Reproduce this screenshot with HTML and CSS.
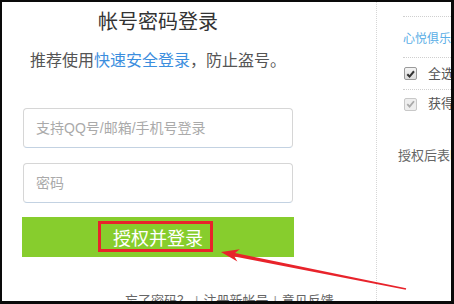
FILE: index.html
```html
<!DOCTYPE html>
<html lang="zh-CN">
<head>
<meta charset="utf-8">
<title>帐号密码登录</title>
<link rel="stylesheet" href="styles.css">
</head>
<body>
<div class="frame">
  <div class="left">
    <h1 class="title">帐号密码登录</h1>
    <p class="subtitle">推荐使用<a class="blue" href="#">快速安全登录</a>，防止盗号。</p>
    <div class="field"><span class="ph">支持QQ号/邮箱/手机号登录</span></div>
    <div class="field field-2"><span class="ph">密码</span></div>
    <div class="btn">授权并登录</div>
    <div class="links"><span>忘了密码？</span><span class="sep">|</span><span>注册新帐号</span><span class="sep">|</span><span>意见反馈</span></div>
  </div>
  <div class="right">
    <div class="rrow rlink">心悦俱乐部</div>
    <div class="rrow rcheck"><span class="cb"><svg viewBox="0 0 12 12" width="12" height="12"><path d="M2.5 6.2 L5 8.8 L9.8 3" fill="none" stroke="#333" stroke-width="2.2"/></svg></span><span class="ctext">全选</span></div>
    <div class="rrow rcheck rlast"><span class="cb cb-dis"><svg viewBox="0 0 12 12" width="12" height="12"><path d="M2.5 6.2 L5 8.8 L9.8 3" fill="none" stroke="#aaa" stroke-width="2"/></svg></span><span class="ctext">获得你的公开信息</span></div>
    <div class="rnote">授权后表明你已同意</div>
  </div>
  <svg class="annot" viewBox="0 0 454 304" width="454" height="304">
    <rect x="99.5" y="222.5" width="112" height="28" fill="none" stroke="#e8232b" stroke-width="3"/>
    <polygon points="221,252 239.8,249.2 235,253.1 406.2,288.3 405.8,289.7 234.4,256.5 237.4,261.6" fill="#e8232b"/>
  </svg>
</div>
</body>
</html>
```

FILE: styles.css
```css
html, body {
  margin: 0;
  padding: 0;
  background: #fff;
}
body {
  width: 454px;
  height: 304px;
  overflow: hidden;
  font-family: "Liberation Sans", "Noto Sans CJK SC", sans-serif;
}
.frame {
  position: relative;
  width: 454px;
  height: 304px;
  box-sizing: border-box;
  border-top: 2px solid #0a0a0a;
  border-left: 2px solid #0a0a0a;
  border-right: 3px solid #0a0a0a;
  border-bottom: 3px solid #0a0a0a;
  display: flex;
  overflow: hidden;
  background: #fff;
}
.left {
  width: 374px;
  flex: none;
  box-sizing: border-box;
  padding-left: 20px;
  display: flex;
  flex-direction: column;
  overflow: hidden;
}
.left > * {
  flex-shrink: 0;
}
.title {
  margin: 8px 0 0 0;
  width: 272px;
  font-size: 20px;
  line-height: 24px;
  font-weight: normal;
  color: #333;
  text-align: center;
}
.subtitle {
  margin: 16px 0 0 0;
  width: 272px;
  font-size: 16px;
  line-height: 22px;
  color: #555;
  text-align: center;
  white-space: nowrap;
}
.blue {
  color: #3b8ede;
  text-decoration: none;
}
.field {
  margin: 36px 0 0 1px;
  width: 270px;
  height: 40px;
  box-sizing: border-box;
  border: 1px solid #d6d6d6;
  border-bottom-color: #c3d2e2;
  border-radius: 4px;
  padding-left: 12px;
  display: flex;
  align-items: center;
}
.field-2 {
  margin-top: 15px;
}
.ph {
  font-size: 14px;
  color: #aaa;
  line-height: 18px;
}
.btn {
  margin-top: 14px;
  width: 272px;
  height: 40px;
  background: #87cd2d;
  color: #fff;
  font-size: 18px;
  display: flex;
  align-items: center;
  justify-content: center;
}
.links {
  margin: 35px 0 0 103px;
  font-size: 13px;
  line-height: 18px;
  color: #666;
  white-space: nowrap;
}
.sep {
  padding: 0 5px;
  color: #999;
}
.right {
  flex: 1;
  border-left: 1px dotted #d6d6d6;
  padding: 14px 0 0 26px;
  overflow: hidden;
  white-space: nowrap;
}
.rrow {
  border-top: 1px dotted #cfcfcf;
  display: flex;
  align-items: center;
}
.rlink {
  height: 40px;
  font-size: 12px;
  color: #5aaee6;
}
.rcheck {
  height: 31px;
  font-size: 13px;
  color: #555;
}
.rlast {
  height: 28px;
}
.cb {
  width: 11px;
  height: 11px;
  flex: none;
  border: 1px solid #9a9a9a;
  border-radius: 2px;
  background: linear-gradient(#f4f4f4, #dcdcdc);
  display: flex;
  align-items: center;
  justify-content: center;
  margin-left: 1px;
}
.cb svg {
  display: block;
}
.cb-dis {
  border-color: #c8c8c8;
  background: #eee;
}
.ctext {
  margin-left: 11px;
  line-height: 16px;
}
.rnote {
  margin: 29px 0 0 -5px;
  font-size: 13px;
  line-height: 18px;
  color: #666;
}
.annot {
  position: absolute;
  left: -2px;
  top: -2px;
  pointer-events: none;
}
```
